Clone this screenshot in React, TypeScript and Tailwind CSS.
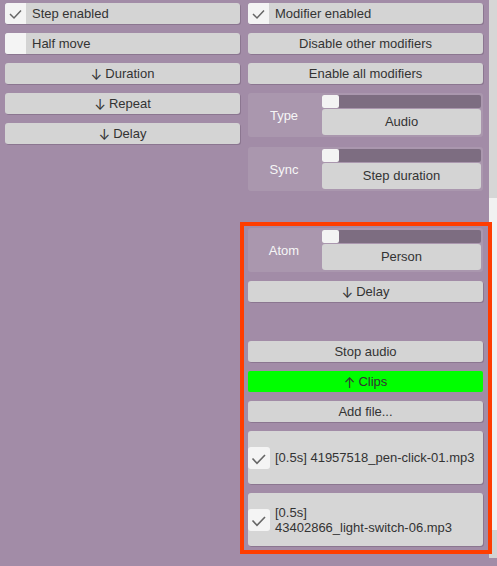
import React from 'react';

const btn =
  'flex h-[21px] items-center justify-center rounded-[3px] bg-[#d4d4d4] text-[#333] shadow-[1px_1px_0_rgba(70,50,75,0.25)]';

function Check({ big }: { big?: boolean }) {
  return big ? (
    <svg width="22" height="22" viewBox="0 0 22 22">
      <polyline points="4.5,11.5 9,16.3 17,8" fill="none" stroke="#666" strokeWidth="1.6" />
    </svg>
  ) : (
    <svg width="21" height="21" viewBox="0 0 21 21">
      <polyline points="5,11 9,15 16,7.5" fill="none" stroke="#666" strokeWidth="1.5" />
    </svg>
  );
}

function Arrow({ up }: { up?: boolean }) {
  return (
    <span className="mr-[3px] inline-block translate-y-[1px] font-['Inter',sans-serif] text-[14px] leading-none text-[#333]">
      {up ? '↑' : '↓'}
    </span>
  );
}

function Toggle({ label, on }: { label: string; on: boolean }) {
  return (
    <div className="flex h-[21px] items-center rounded-[3px] bg-[#d4d4d4] text-[#333] shadow-[1px_1px_0_rgba(70,50,75,0.25)]">
      <div className="flex h-[21px] w-[21px] items-center justify-center rounded-l-[3px] bg-[#f4f4f4]">
        {on && <Check />}
      </div>
      <span className="ml-[6px]">{label}</span>
    </div>
  );
}

function Chooser({ label, value, className }: { label: string; value: string; className?: string }) {
  return (
    <div className={`flex h-[44px] rounded-[3px] bg-[#aa97ae] ${className ?? ''}`}>
      <div className="flex w-[74px] items-center justify-center pr-[2px] pt-[1px] text-[#f6f6f6]">{label}</div>
      <div className="flex flex-1 flex-col pr-[2px] pt-[2px]">
        <div className="h-[13px] rounded-[2px] bg-[#7d6d81]">
          <div className="h-[13px] w-[17px] rounded-[2px] bg-[#f3f3f3]" />
        </div>
        <div className="mt-[1px] flex h-[26px] items-center justify-center rounded-[3px] bg-[#d4d4d4] text-[#333]">
          {value}
        </div>
      </div>
    </div>
  );
}

function Clip({ time, file }: { time: string; file: string }) {
  return (
    <div className="mt-[9px] flex h-[53px] items-center rounded-[3px] bg-[#d6d6d6] text-[#333] shadow-[1px_1px_0_rgba(70,50,75,0.25)]">
      <div className="flex h-[22px] w-[22px] shrink-0 items-center justify-center rounded-[3px] bg-[#f4f4f4]">
        <Check big />
      </div>
      <div className="ml-[5px] flex-1 pr-[3px] leading-[15px]">
        {time} <span className="whitespace-nowrap">{file}</span>
      </div>
    </div>
  );
}

export default function App() {
  return (
    <div className="relative h-[566px] w-[497px] overflow-hidden bg-[#a28ca7] font-['Liberation_Sans',Arial,sans-serif] text-[13px]">
      <div className="flex">
        {/* left column */}
        <div className="ml-[5px] mt-[3px] flex w-[235px] flex-col gap-[9px]">
          <Toggle label="Step enabled" on />
          <Toggle label="Half move" on={false} />
          <div className={btn}><Arrow />Duration</div>
          <div className={btn}><Arrow />Repeat</div>
          <div className={btn}><Arrow />Delay</div>
        </div>

        {/* right column */}
        <div className="ml-[8px] mt-[3px] flex w-[235px] flex-col">
          <Toggle label="Modifier enabled" on />
          <div className={`${btn} mt-[9px]`}>Disable other modifiers</div>
          <div className={`${btn} mt-[9px]`}>Enable all modifiers</div>
          <Chooser className="mt-[9px]" label="Type" value="Audio" />
          <Chooser className="mt-[10px]" label="Sync" value="Step duration" />
          <Chooser className="mt-[37px]" label="Atom" value="Person" />
          <div className={`${btn} mt-[9px]`}><Arrow />Delay</div>
          <div className={`${btn} mt-[39px]`}>Stop audio</div>
          <div className="mt-[9px] flex h-[21px] items-center justify-center rounded-[2px] bg-[#00ff00] text-[#333]">
            <Arrow up />Clips
          </div>
          <div className={`${btn} mt-[9px]`}>Add file...</div>
          <Clip time="[0.5s]" file="41957518_pen-click-01.mp3" />
          <Clip time="[0.5s]" file="43402866_light-switch-06.mp3" />
        </div>

        {/* scroll strip */}
        <div className="ml-auto flex w-[8px] flex-col">
          <div className="h-[198px] bg-[#d6d6d6]" />
          <div className="h-[332px] bg-[#f1f1f1]" />
          <div className="h-[28px] bg-[#d3d3d3]" />
        </div>
      </div>

      {/* highlight overlay */}
      <div className="pointer-events-none absolute left-[240px] top-[222px] h-[332px] w-[252px] border-[4px] border-[#ff3d00]" />
    </div>
  );
}
